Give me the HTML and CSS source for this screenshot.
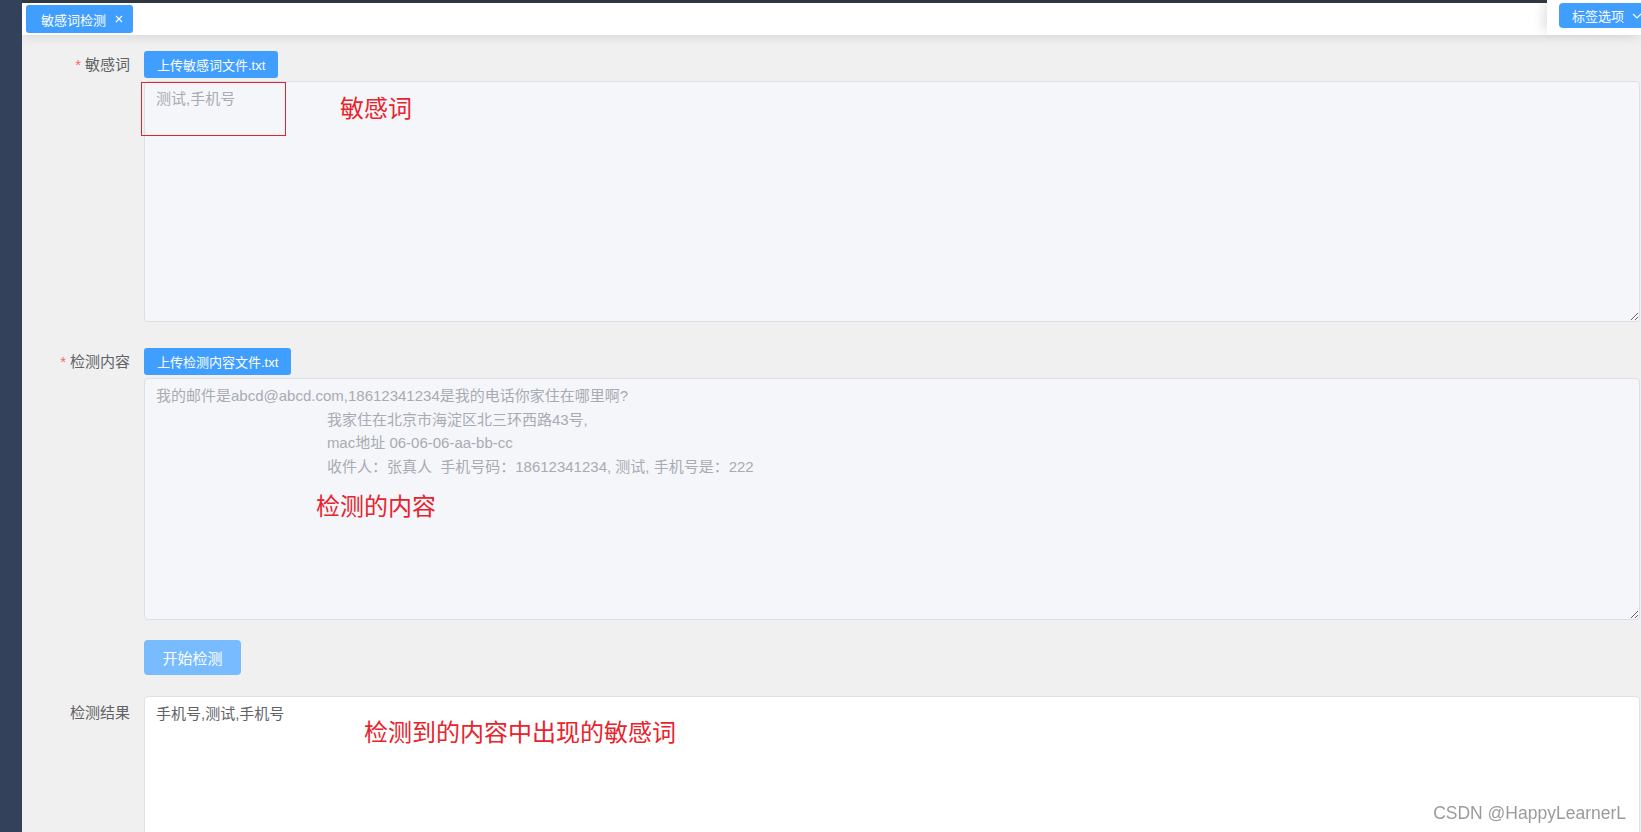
FILE: index.html
```html
<!DOCTYPE html>
<html lang="zh-CN">
<head>
<meta charset="utf-8">
<title>敏感词检测</title>
<link rel="stylesheet" href="styles.css">
</head>
<body>
<div class="app">
  <aside class="sidebar"></aside>
  <div class="main">
    <div class="top-strip"></div>
    <div class="tags-bar">
      <span class="tag">敏感词检测<svg class="tag-close" viewBox="0 0 8 8" width="8" height="8"><path d="M1 1L7 7M7 1L1 7" stroke="#fff" stroke-width="1.1" fill="none"/></svg></span>
      <div class="tags-menu">
        <button class="menu-btn">标签选项<svg class="chev" viewBox="0 0 10 6" width="10" height="6"><path d="M1 1L5 5L9 1" stroke="#fff" stroke-width="1.1" fill="none"/></svg></button>
      </div>
    </div>
    <div class="content">
      <form class="form">
        <div class="form-item item-gap-26">
          <label class="label"><span class="req">*</span>敏感词</label>
          <div class="control">
            <button type="button" class="btn-upload">上传敏感词文件.txt</button>
            <div class="field">
              <textarea class="ta ta-words" placeholder="测试,手机号"></textarea>
              <div class="red-box"></div>
              <div class="note note-1">敏感词</div>
            </div>
          </div>
        </div>
        <div class="form-item item-gap-20">
          <label class="label"><span class="req">*</span>检测内容</label>
          <div class="control">
            <button type="button" class="btn-upload">上传检测内容文件.txt</button>
            <div class="field">
              <textarea class="ta ta-content">我的邮件是abcd@abcd.com,18612341234是我的电话你家住在哪里啊?
                                         我家住在北京市海淀区北三环西路43号,
                                         mac地址 06-06-06-aa-bb-cc
                                         收件人：张真人  手机号码：18612341234, 测试, 手机号是：222</textarea>
              <div class="note note-2">检测的内容</div>
            </div>
          </div>
        </div>
        <div class="form-item item-gap-21">
          <div class="label"></div>
          <div class="control">
            <button type="button" class="btn-start">开始检测</button>
          </div>
        </div>
        <div class="form-item">
          <label class="label label-result">检测结果</label>
          <div class="control">
            <div class="field">
              <textarea class="ta ta-result">手机号,测试,手机号</textarea>
              <div class="note note-3">检测到的内容中出现的敏感词</div>
            </div>
          </div>
        </div>
      </form>
    </div>
  </div>
</div>
<div class="watermark">CSDN @HappyLearnerL</div>
</body>
</html>
```
FILE: styles.css
```css
html, body {
  margin: 0;
  padding: 0;
  height: 100%;
  overflow: hidden;
}
body {
  font-family: "Liberation Sans", "Noto Sans CJK SC", sans-serif;
  background: #f0f0f0;
}
.app {
  display: flex;
  height: 100vh;
  overflow: hidden;
}
.sidebar {
  width: 22px;
  flex: none;
  background: #33425a;
}
.main {
  flex: 1;
  display: flex;
  flex-direction: column;
  min-width: 0;
  min-height: 0;
  position: relative;
  overflow: hidden;
}
.top-strip {
  height: 3px;
  flex: none;
  background: #343a45;
}
.tags-bar {
  height: 32px;
  flex: none;
  background: #fff;
  position: relative;
  z-index: 2;
  box-shadow: 0 2px 12px rgba(0, 0, 0, 0.1);
}
.tag {
  display: inline-flex;
  align-items: center;
  box-sizing: border-box;
  height: 28px;
  margin: 2px 0 0 4px;
  padding: 0 10px 0 15px;
  background: #409eff;
  border-radius: 3px;
  color: #fff;
  font-size: 13px;
}
.tag-close {
  margin-left: 9px;
}
.tags-menu {
  position: absolute;
  top: -3px;
  right: 0;
  width: 94px;
  height: 35px;
  background: #fff;
  box-shadow: -8px 0 12px -4px rgba(0, 0, 0, 0.12);
}
.menu-btn {
  position: absolute;
  top: 3px;
  left: 12px;
  height: 25px;
  width: 100px;
  border: none;
  border-radius: 4px;
  background: #409eff;
  color: #fff;
  font-family: inherit;
  font-size: 13px;
  padding: 0 0 0 13px;
  display: flex;
  align-items: center;
  white-space: nowrap;
}
.chev {
  margin-left: 8px;
}
.content {
  flex: 1;
  min-height: 0;
  overflow: hidden;
  padding: 16px 1px 0 0;
}
.form {
  margin: 0;
}
.form-item {
  display: flex;
}
.item-gap-26 { margin-bottom: 26px; }
.item-gap-20 { margin-bottom: 20px; }
.item-gap-21 { margin-bottom: 21px; }
.label {
  width: 122px;
  flex: none;
  box-sizing: border-box;
  padding-right: 14px;
  text-align: right;
  font-size: 15px;
  line-height: 27px;
  color: #606266;
}
.label-result {
  padding-top: 3px;
}
.req {
  color: #f56c6c;
  margin-right: 4px;
}
.control {
  flex: 1;
  min-width: 0;
  display: flex;
  flex-direction: column;
  align-items: flex-start;
}
.btn-upload {
  height: 27px;
  padding: 0 13px;
  border: none;
  border-radius: 3px;
  background: #409eff;
  color: #fff;
  font-family: inherit;
  font-size: 13px;
  margin-bottom: 3px;
}
.btn-start {
  height: 35px;
  width: 97px;
  border: none;
  border-radius: 4px;
  background: #79bbff;
  color: #fff;
  font-family: inherit;
  font-size: 15px;
}
.field {
  position: relative;
  width: 100%;
}
.ta {
  display: block;
  box-sizing: border-box;
  width: 100%;
  margin: 0;
  padding: 5px 11px;
  border: 1px solid #dcdfe6;
  border-radius: 4px;
  background: #f5f6fa;
  font-family: inherit;
  font-size: 15px;
  line-height: 23.5px;
  color: #a8abb2;
  resize: vertical;
  outline: none;
}
.ta::placeholder {
  color: #a8abb2;
}
.ta-words { height: 241px; }
.ta-content {
  height: 242px;
  font-family: "Liberation Sans", "Noto Sans CJK JP", sans-serif;
}
.ta-result {
  height: 170px;
  background: #fff;
  color: #606266;
  resize: none;
}
.red-box {
  position: absolute;
  left: -3px;
  top: 1px;
  width: 145px;
  height: 54px;
  box-sizing: border-box;
  border: 1px solid #e3262c;
}
.note {
  position: absolute;
  font-family: "Noto Sans CJK SC", sans-serif;
  font-size: 24px;
  line-height: 24px;
  color: #e8232c;
  white-space: nowrap;
}
.note-1 { left: 196px; top: 14px; }
.note-2 { left: 172px; top: 115px; }
.note-3 { left: 220px; top: 23px; }
.watermark {
  position: fixed;
  right: 15px;
  bottom: 9px;
  font-size: 17.5px;
  line-height: 20px;
  color: #9b9b9b;
}
```
